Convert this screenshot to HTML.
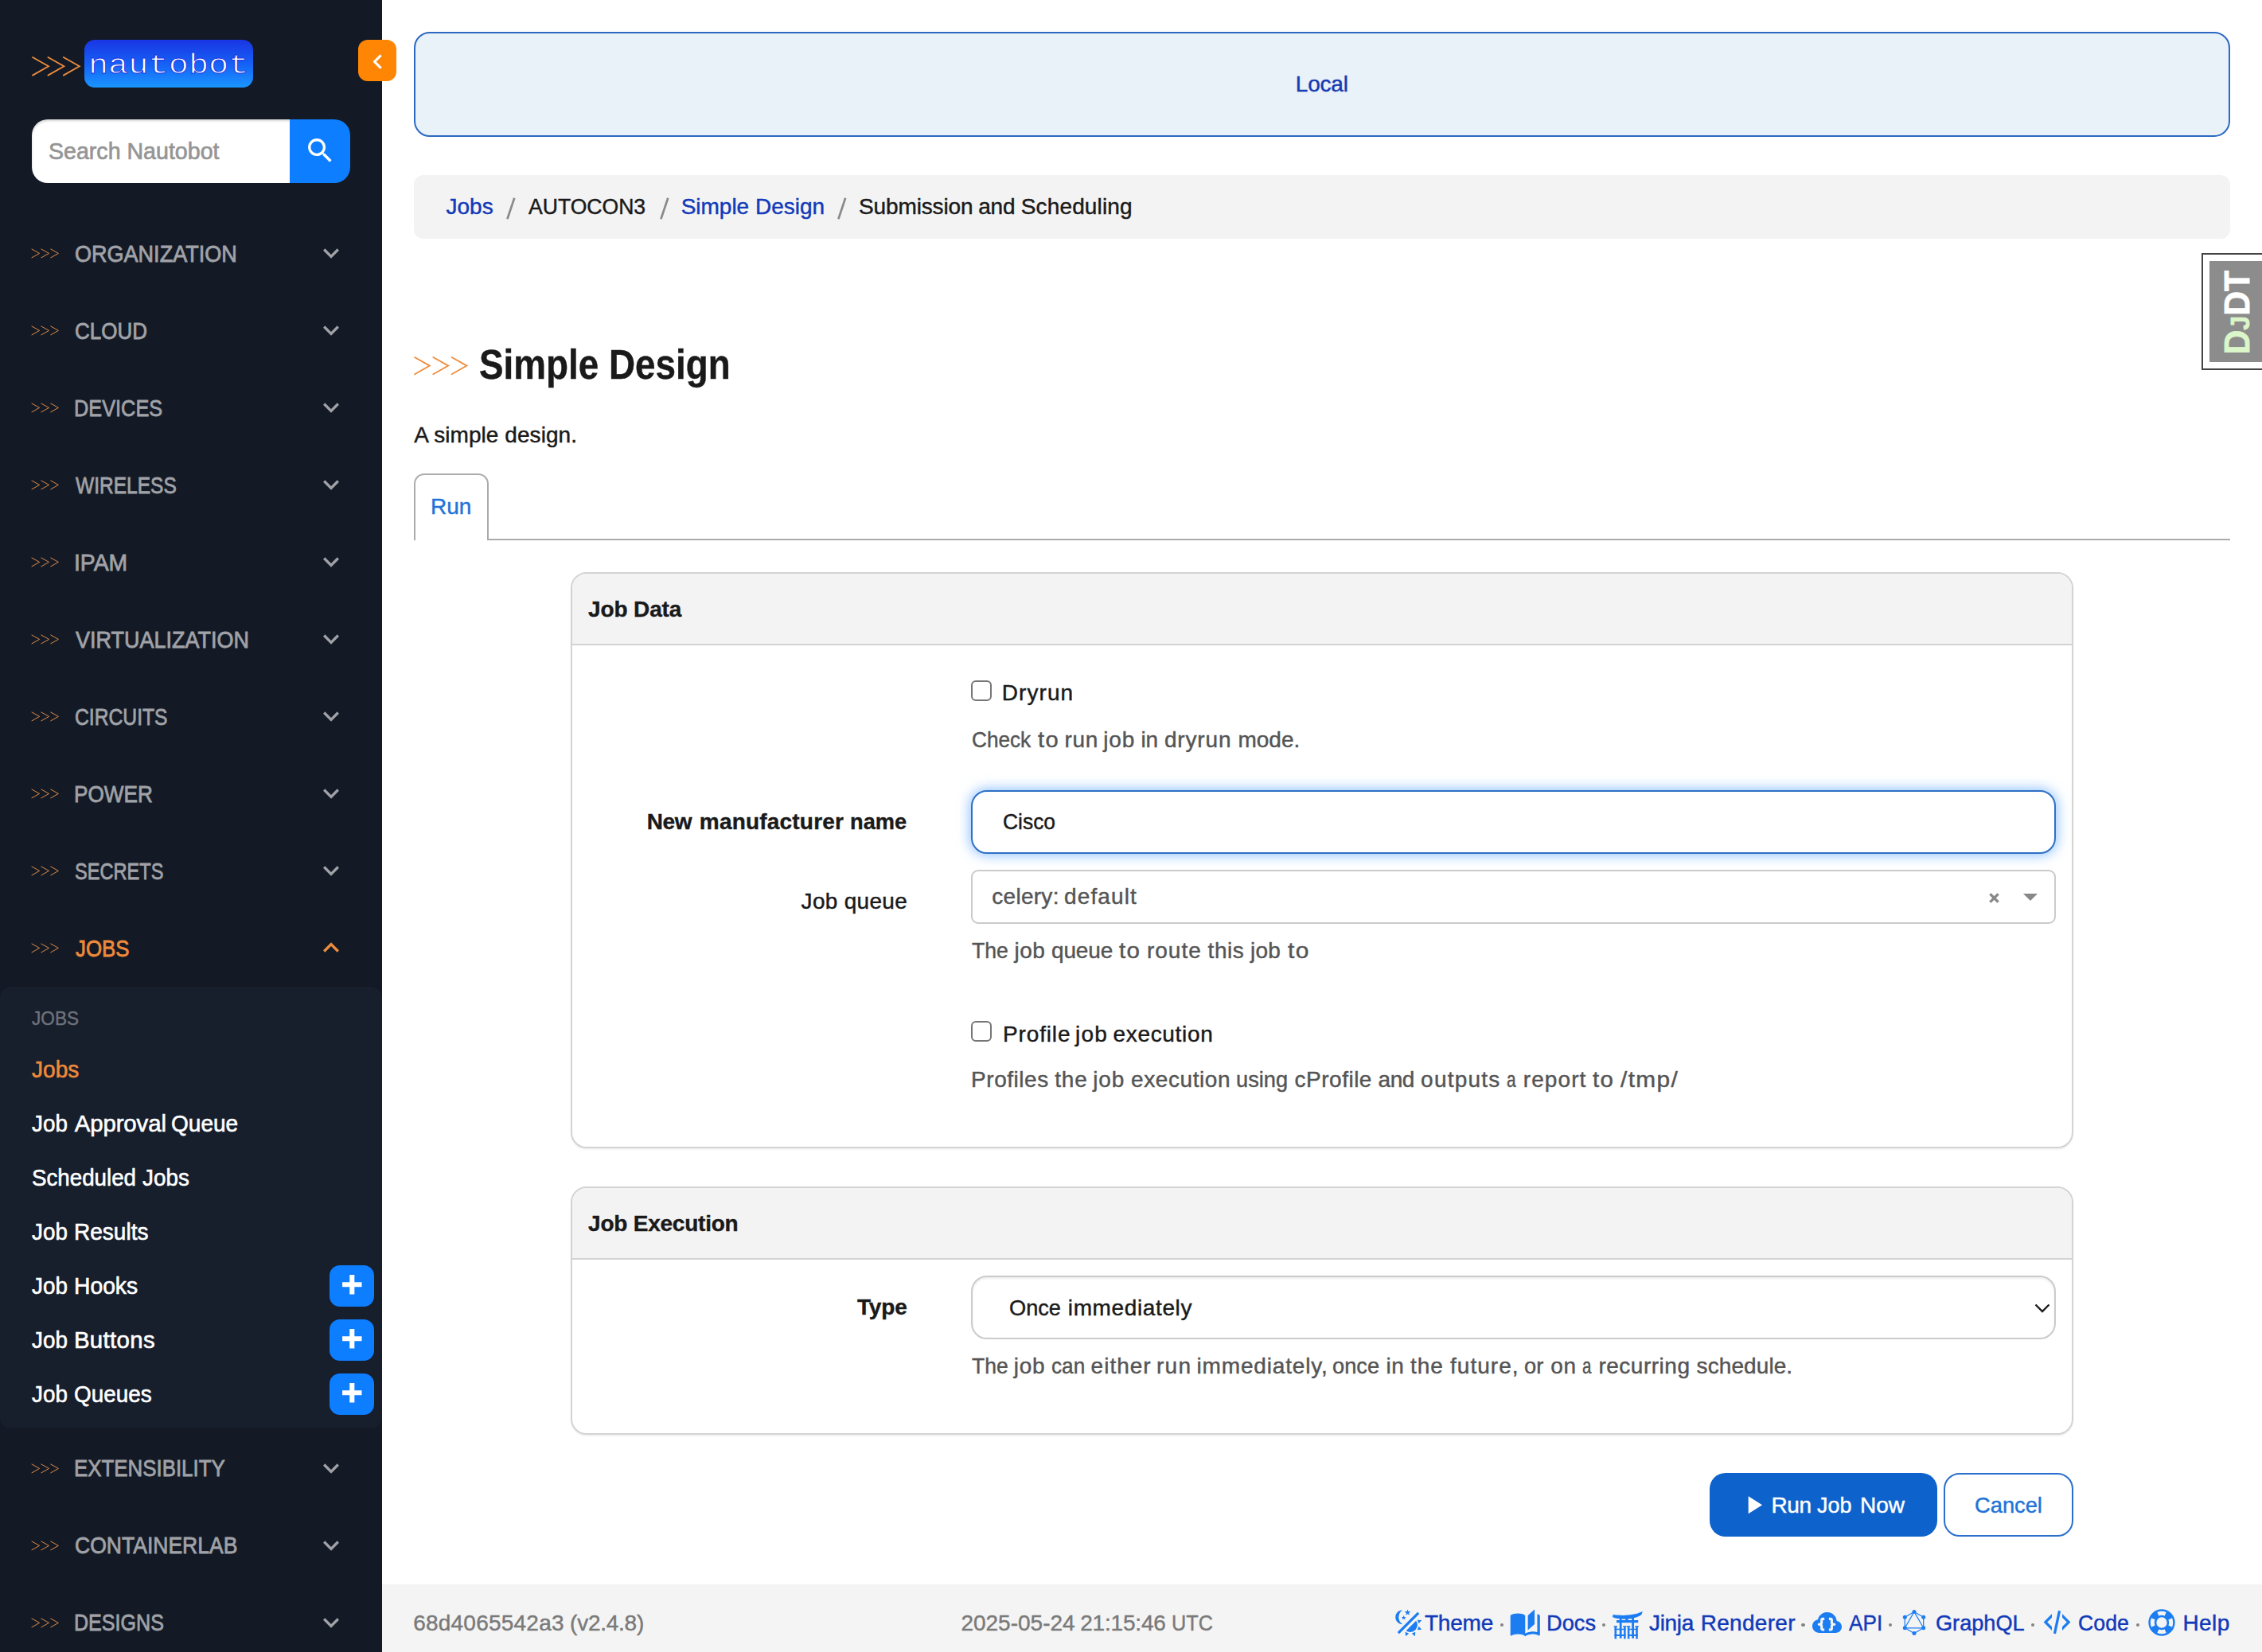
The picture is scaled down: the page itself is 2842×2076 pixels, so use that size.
<!DOCTYPE html>
<html><head><meta charset="utf-8"><title>Simple Design - Nautobot</title>
<style>
html,body{margin:0;padding:0}
body{width:2842px;height:2076px;overflow:hidden;position:relative;background:#fff;font-family:'Liberation Sans', sans-serif;}
.t{position:absolute;white-space:nowrap;line-height:1;transform-origin:0 0;margin:0;font-weight:400;text-decoration:none}
nav,main,footer{display:block}
.a{position:absolute;box-sizing:border-box}
svg{position:absolute;overflow:visible}
</style></head><body>
<nav>
<div class="a" style="left:0;top:0;width:480px;height:2076px;background:#131a26"></div>
<svg style="left:40.7px;top:71.7px" width="58.8" height="22.6" viewBox="0 0 58.8 22.6"><g fill="none" stroke="#ee8d3e" stroke-width="1.8" stroke-linecap="round" stroke-linejoin="miter"><polyline points="0.00,0 20.00,11.30 0.00,22.60"/><polyline points="19.40,0 39.40,11.30 19.40,22.60"/><polyline points="38.80,0 58.80,11.30 38.80,22.60"/></g></svg>
<svg style="left:106px;top:50px" width="212" height="60" viewBox="0 0 212 60"><defs><linearGradient id="lg" gradientUnits="userSpaceOnUse" x1="0" y1="0" x2="0" y2="60"><stop offset="0" stop-color="#1a35e4"/><stop offset="0.5" stop-color="#1560f5"/><stop offset="1" stop-color="#1a96ff"/></linearGradient></defs><rect width="212" height="60" rx="13" fill="url(#lg)"/><text transform="translate(4.9,42) scale(1.167,1)" font-family="Liberation Mono, monospace" font-size="36" fill="#fff" stroke="url(#lg)" stroke-width="0.9" paint-order="fill stroke">nautobot</text></svg>
<div class="a" style="left:40px;top:150px;width:326px;height:80px;background:#fff;border-radius:20px 0 0 20px;box-shadow:inset 0 2px 3px rgba(0,0,0,.18)"></div>
<div class="a" style="left:364px;top:150px;width:76px;height:80px;background:#0d7eff;border-radius:0 20px 20px 0"></div>
<svg style="left:381.8px;top:168.8px" width="40.6" height="40.6" viewBox="0 0 24 24"><path fill="#fff" d="M9.5,3A6.5,6.5 0 0,1 16,9.5C16,11.11 15.41,12.59 14.44,13.73L14.71,14H15.5L20.5,19L19,20.5L14,15.5V14.71L13.73,14.44C12.59,15.41 11.11,16 9.5,16A6.5,6.5 0 0,1 3,9.5A6.5,6.5 0 0,1 9.5,3M9.5,5C7,5 5,7 5,9.5C5,12 7,14 9.5,14C12,14 14,12 14,9.5C14,7 12,5 9.5,5Z"/></svg>
<svg style="left:40.3px;top:313.1px" width="33.4" height="10.8" viewBox="0 0 33.4 10.8"><g fill="none" stroke="#dd8b45" stroke-width="1.0" stroke-linecap="round" stroke-linejoin="miter"><polyline points="0.00,0 9.60,5.40 0.00,10.80"/><polyline points="11.90,0 21.50,5.40 11.90,10.80"/><polyline points="23.80,0 33.40,5.40 23.80,10.80"/></g></svg>
<svg style="left:396.0px;top:298.1px" width="40" height="40" viewBox="0 0 24 24"><path fill="#a0a2a7" d="M7.41,8.58L12,13.17L16.59,8.58L18,10L12,16L6,10L7.41,8.58Z"/></svg>
<svg style="left:40.3px;top:410.1px" width="33.4" height="10.8" viewBox="0 0 33.4 10.8"><g fill="none" stroke="#dd8b45" stroke-width="1.0" stroke-linecap="round" stroke-linejoin="miter"><polyline points="0.00,0 9.60,5.40 0.00,10.80"/><polyline points="11.90,0 21.50,5.40 11.90,10.80"/><polyline points="23.80,0 33.40,5.40 23.80,10.80"/></g></svg>
<svg style="left:396.0px;top:395.1px" width="40" height="40" viewBox="0 0 24 24"><path fill="#a0a2a7" d="M7.41,8.58L12,13.17L16.59,8.58L18,10L12,16L6,10L7.41,8.58Z"/></svg>
<svg style="left:40.3px;top:507.1px" width="33.4" height="10.8" viewBox="0 0 33.4 10.8"><g fill="none" stroke="#dd8b45" stroke-width="1.0" stroke-linecap="round" stroke-linejoin="miter"><polyline points="0.00,0 9.60,5.40 0.00,10.80"/><polyline points="11.90,0 21.50,5.40 11.90,10.80"/><polyline points="23.80,0 33.40,5.40 23.80,10.80"/></g></svg>
<svg style="left:396.0px;top:492.1px" width="40" height="40" viewBox="0 0 24 24"><path fill="#a0a2a7" d="M7.41,8.58L12,13.17L16.59,8.58L18,10L12,16L6,10L7.41,8.58Z"/></svg>
<svg style="left:40.3px;top:604.1px" width="33.4" height="10.8" viewBox="0 0 33.4 10.8"><g fill="none" stroke="#dd8b45" stroke-width="1.0" stroke-linecap="round" stroke-linejoin="miter"><polyline points="0.00,0 9.60,5.40 0.00,10.80"/><polyline points="11.90,0 21.50,5.40 11.90,10.80"/><polyline points="23.80,0 33.40,5.40 23.80,10.80"/></g></svg>
<svg style="left:396.0px;top:589.1px" width="40" height="40" viewBox="0 0 24 24"><path fill="#a0a2a7" d="M7.41,8.58L12,13.17L16.59,8.58L18,10L12,16L6,10L7.41,8.58Z"/></svg>
<svg style="left:40.3px;top:701.1px" width="33.4" height="10.8" viewBox="0 0 33.4 10.8"><g fill="none" stroke="#dd8b45" stroke-width="1.0" stroke-linecap="round" stroke-linejoin="miter"><polyline points="0.00,0 9.60,5.40 0.00,10.80"/><polyline points="11.90,0 21.50,5.40 11.90,10.80"/><polyline points="23.80,0 33.40,5.40 23.80,10.80"/></g></svg>
<svg style="left:396.0px;top:686.1px" width="40" height="40" viewBox="0 0 24 24"><path fill="#a0a2a7" d="M7.41,8.58L12,13.17L16.59,8.58L18,10L12,16L6,10L7.41,8.58Z"/></svg>
<svg style="left:40.3px;top:798.1px" width="33.4" height="10.8" viewBox="0 0 33.4 10.8"><g fill="none" stroke="#dd8b45" stroke-width="1.0" stroke-linecap="round" stroke-linejoin="miter"><polyline points="0.00,0 9.60,5.40 0.00,10.80"/><polyline points="11.90,0 21.50,5.40 11.90,10.80"/><polyline points="23.80,0 33.40,5.40 23.80,10.80"/></g></svg>
<svg style="left:396.0px;top:783.1px" width="40" height="40" viewBox="0 0 24 24"><path fill="#a0a2a7" d="M7.41,8.58L12,13.17L16.59,8.58L18,10L12,16L6,10L7.41,8.58Z"/></svg>
<svg style="left:40.3px;top:895.1px" width="33.4" height="10.8" viewBox="0 0 33.4 10.8"><g fill="none" stroke="#dd8b45" stroke-width="1.0" stroke-linecap="round" stroke-linejoin="miter"><polyline points="0.00,0 9.60,5.40 0.00,10.80"/><polyline points="11.90,0 21.50,5.40 11.90,10.80"/><polyline points="23.80,0 33.40,5.40 23.80,10.80"/></g></svg>
<svg style="left:396.0px;top:880.1px" width="40" height="40" viewBox="0 0 24 24"><path fill="#a0a2a7" d="M7.41,8.58L12,13.17L16.59,8.58L18,10L12,16L6,10L7.41,8.58Z"/></svg>
<svg style="left:40.3px;top:992.1px" width="33.4" height="10.8" viewBox="0 0 33.4 10.8"><g fill="none" stroke="#dd8b45" stroke-width="1.0" stroke-linecap="round" stroke-linejoin="miter"><polyline points="0.00,0 9.60,5.40 0.00,10.80"/><polyline points="11.90,0 21.50,5.40 11.90,10.80"/><polyline points="23.80,0 33.40,5.40 23.80,10.80"/></g></svg>
<svg style="left:396.0px;top:977.1px" width="40" height="40" viewBox="0 0 24 24"><path fill="#a0a2a7" d="M7.41,8.58L12,13.17L16.59,8.58L18,10L12,16L6,10L7.41,8.58Z"/></svg>
<svg style="left:40.3px;top:1089.1px" width="33.4" height="10.8" viewBox="0 0 33.4 10.8"><g fill="none" stroke="#dd8b45" stroke-width="1.0" stroke-linecap="round" stroke-linejoin="miter"><polyline points="0.00,0 9.60,5.40 0.00,10.80"/><polyline points="11.90,0 21.50,5.40 11.90,10.80"/><polyline points="23.80,0 33.40,5.40 23.80,10.80"/></g></svg>
<svg style="left:396.0px;top:1074.1px" width="40" height="40" viewBox="0 0 24 24"><path fill="#a0a2a7" d="M7.41,8.58L12,13.17L16.59,8.58L18,10L12,16L6,10L7.41,8.58Z"/></svg>
<svg style="left:40.3px;top:1186.1px" width="33.4" height="10.8" viewBox="0 0 33.4 10.8"><g fill="none" stroke="#dd8b45" stroke-width="1.0" stroke-linecap="round" stroke-linejoin="miter"><polyline points="0.00,0 9.60,5.40 0.00,10.80"/><polyline points="11.90,0 21.50,5.40 11.90,10.80"/><polyline points="23.80,0 33.40,5.40 23.80,10.80"/></g></svg>
<svg style="left:396.0px;top:1171.0px" width="40" height="40" viewBox="0 0 24 24"><path fill="#ee8d3e" d="M7.41,15.41L12,10.83L16.59,15.41L18,14L12,8L6,14L7.41,15.41Z"/></svg>
<svg style="left:40.3px;top:1839.6px" width="33.4" height="10.8" viewBox="0 0 33.4 10.8"><g fill="none" stroke="#dd8b45" stroke-width="1.0" stroke-linecap="round" stroke-linejoin="miter"><polyline points="0.00,0 9.60,5.40 0.00,10.80"/><polyline points="11.90,0 21.50,5.40 11.90,10.80"/><polyline points="23.80,0 33.40,5.40 23.80,10.80"/></g></svg>
<svg style="left:396.0px;top:1824.6px" width="40" height="40" viewBox="0 0 24 24"><path fill="#a0a2a7" d="M7.41,8.58L12,13.17L16.59,8.58L18,10L12,16L6,10L7.41,8.58Z"/></svg>
<svg style="left:40.3px;top:1936.6px" width="33.4" height="10.8" viewBox="0 0 33.4 10.8"><g fill="none" stroke="#dd8b45" stroke-width="1.0" stroke-linecap="round" stroke-linejoin="miter"><polyline points="0.00,0 9.60,5.40 0.00,10.80"/><polyline points="11.90,0 21.50,5.40 11.90,10.80"/><polyline points="23.80,0 33.40,5.40 23.80,10.80"/></g></svg>
<svg style="left:396.0px;top:1921.6px" width="40" height="40" viewBox="0 0 24 24"><path fill="#a0a2a7" d="M7.41,8.58L12,13.17L16.59,8.58L18,10L12,16L6,10L7.41,8.58Z"/></svg>
<svg style="left:40.3px;top:2033.6px" width="33.4" height="10.8" viewBox="0 0 33.4 10.8"><g fill="none" stroke="#dd8b45" stroke-width="1.0" stroke-linecap="round" stroke-linejoin="miter"><polyline points="0.00,0 9.60,5.40 0.00,10.80"/><polyline points="11.90,0 21.50,5.40 11.90,10.80"/><polyline points="23.80,0 33.40,5.40 23.80,10.80"/></g></svg>
<svg style="left:396.0px;top:2018.6px" width="40" height="40" viewBox="0 0 24 24"><path fill="#a0a2a7" d="M7.41,8.58L12,13.17L16.59,8.58L18,10L12,16L6,10L7.41,8.58Z"/></svg>
<div class="a" style="left:0;top:1240px;width:480px;height:555px;background:#171e2c;border-radius:14px"></div>
<div class="a" style="left:414px;top:1590px;width:56px;height:52px;background:#0d7eff;border-radius:13px"></div>
<svg style="left:423.7px;top:1596.2px" width="36.6" height="36.6" viewBox="0 0 24 24"><path fill="#fff" d="M20 14H14V20H10V14H4V10H10V4H14V10H20V14Z"/></svg>
<div class="a" style="left:414px;top:1658px;width:56px;height:52px;background:#0d7eff;border-radius:13px"></div>
<svg style="left:423.7px;top:1664.2px" width="36.6" height="36.6" viewBox="0 0 24 24"><path fill="#fff" d="M20 14H14V20H10V14H4V10H10V4H14V10H20V14Z"/></svg>
<div class="a" style="left:414px;top:1726px;width:56px;height:52px;background:#0d7eff;border-radius:13px"></div>
<svg style="left:423.7px;top:1732.2px" width="36.6" height="36.6" viewBox="0 0 24 24"><path fill="#fff" d="M20 14H14V20H10V14H4V10H10V4H14V10H20V14Z"/></svg>
<span class="t" style="left:61.4px;top:174.6px;font-size:29.4px;-webkit-text-stroke:0.7px;transform:scaleX(0.9723);color:#959595">Search Nautobot</span>
<span class="t" style="left:93.8px;top:303.7px;font-size:29.4px;-webkit-text-stroke:0.8px;transform:scaleX(0.9197);color:#a0a2a7">ORGANIZATION</span>
<span class="t" style="left:93.9px;top:400.7px;font-size:29.4px;-webkit-text-stroke:0.8px;transform:scaleX(0.8841);color:#a0a2a7">CLOUD</span>
<span class="t" style="left:93.0px;top:497.7px;font-size:29.4px;-webkit-text-stroke:0.8px;transform:scaleX(0.8615);color:#a0a2a7">DEVICES</span>
<span class="t" style="left:94.7px;top:594.7px;font-size:29.4px;-webkit-text-stroke:0.8px;transform:scaleX(0.8344);color:#a0a2a7">WIRELESS</span>
<span class="t" style="left:92.9px;top:691.7px;font-size:29.4px;-webkit-text-stroke:0.8px;transform:scaleX(0.9643);color:#a0a2a7">IPAM</span>
<span class="t" style="left:94.8px;top:788.7px;font-size:29.4px;-webkit-text-stroke:0.8px;transform:scaleX(0.9181);color:#a0a2a7">VIRTUALIZATION</span>
<span class="t" style="left:93.9px;top:885.7px;font-size:29.4px;-webkit-text-stroke:0.8px;transform:scaleX(0.8400);color:#a0a2a7">CIRCUITS</span>
<span class="t" style="left:93.0px;top:982.7px;font-size:29.4px;-webkit-text-stroke:0.8px;transform:scaleX(0.8894);color:#a0a2a7">POWER</span>
<span class="t" style="left:93.9px;top:1079.7px;font-size:29.4px;-webkit-text-stroke:0.8px;transform:scaleX(0.8028);color:#a0a2a7">SECRETS</span>
<span class="t" style="left:94.8px;top:1176.7px;font-size:29.4px;-webkit-text-stroke:0.8px;transform:scaleX(0.8797);color:#ee8a3a">JOBS</span>
<span class="t" style="left:93.2px;top:1830.2px;font-size:29.4px;-webkit-text-stroke:0.8px;transform:scaleX(0.8798);color:#a0a2a7">EXTENSIBILITY</span>
<span class="t" style="left:94.1px;top:1927.2px;font-size:29.4px;-webkit-text-stroke:0.8px;transform:scaleX(0.9027);color:#a0a2a7">CONTAINERLAB</span>
<span class="t" style="left:93.2px;top:2024.2px;font-size:29.4px;-webkit-text-stroke:0.8px;transform:scaleX(0.8537);color:#a0a2a7">DESIGNS</span>
<span class="t" style="left:40.2px;top:1267.8px;font-size:24px;-webkit-text-stroke:0.45px;transform:scaleX(0.9416);color:#6d727a">JOBS</span>
<span class="t" style="left:40.3px;top:1328.6px;font-size:29.4px;-webkit-text-stroke:0.6px;transform:scaleX(0.9550);color:#ee8a3a">Jobs</span>
<span class="t" style="left:40.2px;top:1396.6px;font-size:29.4px;-webkit-text-stroke:0.6px;transform:scaleX(0.9467);color:#ffffff">Job</span>
<span class="t" style="left:93.7px;top:1396.6px;font-size:29.4px;-webkit-text-stroke:0.6px;letter-spacing:-0.110px;color:#ffffff">Approval</span>
<span class="t" style="left:215.0px;top:1396.6px;font-size:29.4px;-webkit-text-stroke:0.6px;transform:scaleX(0.9543);color:#ffffff">Queue</span>
<span class="t" style="left:39.6px;top:1464.6px;font-size:29.4px;-webkit-text-stroke:0.6px;transform:scaleX(0.9434);color:#ffffff">Scheduled</span>
<span class="t" style="left:178.8px;top:1464.6px;font-size:29.4px;-webkit-text-stroke:0.6px;transform:scaleX(0.9470);color:#ffffff">Jobs</span>
<span class="t" style="left:40.2px;top:1532.6px;font-size:29.4px;-webkit-text-stroke:0.6px;transform:scaleX(0.9467);color:#ffffff">Job</span>
<span class="t" style="left:93.0px;top:1532.6px;font-size:29.4px;-webkit-text-stroke:0.6px;transform:scaleX(0.9540);color:#ffffff">Results</span>
<span class="t" style="left:40.2px;top:1600.6px;font-size:29.4px;-webkit-text-stroke:0.6px;transform:scaleX(0.9467);color:#ffffff">Job</span>
<span class="t" style="left:93.0px;top:1600.6px;font-size:29.4px;-webkit-text-stroke:0.6px;transform:scaleX(0.9617);color:#ffffff">Hooks</span>
<span class="t" style="left:40.2px;top:1668.6px;font-size:29.4px;-webkit-text-stroke:0.6px;transform:scaleX(0.9467);color:#ffffff">Job</span>
<span class="t" style="left:92.9px;top:1668.6px;font-size:29.4px;-webkit-text-stroke:0.6px;letter-spacing:0.355px;color:#ffffff">Buttons</span>
<span class="t" style="left:40.2px;top:1736.6px;font-size:29.4px;-webkit-text-stroke:0.6px;transform:scaleX(0.9467);color:#ffffff">Job</span>
<span class="t" style="left:93.1px;top:1736.6px;font-size:29.4px;-webkit-text-stroke:0.6px;transform:scaleX(0.9495);color:#ffffff">Queues</span>
</nav>
<main>
<div class="a" style="left:450px;top:50px;width:48px;height:52px;background:#ff8504;border-radius:12px"></div>
<svg style="left:455.8px;top:58.7px" width="37" height="37" viewBox="0 0 24 24"><path fill="#fff" d="M15.41,16.58L10.83,12L15.41,7.41L14,6L8,12L14,18L15.41,16.58Z"/></svg>
<div class="a" style="left:520px;top:40px;width:2282px;height:132px;background:#e9f1f9;border:2px solid #2b69c3;border-radius:20px"></div>
<div class="a" style="left:520px;top:220px;width:2282px;height:80px;background:#f3f3f3;border-radius:12px"></div>
<div class="a" style="left:2766px;top:318px;width:90px;height:147px;background:#fff;border:2.5px solid #444"></div>
<div class="a" style="left:2776px;top:328px;width:80px;height:127px;background:#8c8c8c"></div>
<svg style="left:2776px;top:328px" width="66" height="127" viewBox="0 0 66 127"><g transform="translate(49.8,117.6) rotate(-90) scale(0.95,1.0)" font-family="Liberation Sans, sans-serif" font-weight="700" stroke-width="0.8"><text x="0" y="0" font-size="45" fill="#dbf6c9" stroke="#dbf6c9">D<tspan font-size="34">J</tspan><tspan fill="#ffffff" stroke="#ffffff">DT</tspan></text></g></svg>
<svg style="left:521.0px;top:449.4px" width="65.5" height="21.2" viewBox="0 0 65.5 21.2"><g fill="none" stroke="#ee8d3e" stroke-width="1.8" stroke-linecap="round" stroke-linejoin="miter"><polyline points="0.00,0 18.90,10.60 0.00,21.20"/><polyline points="23.30,0 42.20,10.60 23.30,21.20"/><polyline points="46.60,0 65.50,10.60 46.60,21.20"/></g></svg>
<div class="a" style="left:520px;top:677px;width:2282px;height:2px;background:#ababab"></div>
<div class="a" style="left:520px;top:595px;width:94px;height:84px;background:#fff;border:2px solid #ababab;border-bottom:none;border-radius:13px 13px 0 0"></div>
<div class="a" style="left:717px;top:719px;width:1888px;height:724px;background:#fff;border:2px solid #d3d3d3;border-radius:20px;box-shadow:0 2px 2px rgba(0,0,0,.05);overflow:hidden"><div style="height:88px;background:#f3f3f3;border-bottom:2px solid #d3d3d3"></div></div>
<div class="a" style="left:1220px;top:854.8px;width:26px;height:26px;background:#fff;border:2px solid #767676;border-radius:6px"></div>
<div class="a" style="left:1220px;top:993px;width:1363px;height:80px;background:#fff;border:2px solid #2f6fc6;border-radius:20px;box-shadow:0 0 15px 2px rgba(80,160,255,.62)"></div>
<div class="a" style="left:1220px;top:1093px;width:1363px;height:68px;background:#fff;border:2px solid #cbcbcb;border-radius:9px"></div>
<svg style="left:2498.5px;top:1122px" width="13" height="13" viewBox="0 0 14 14"><path d="M1.5 1.5L12.5 12.5M12.5 1.5L1.5 12.5" stroke="#888" stroke-width="3.6" fill="none"/></svg>
<svg style="left:2541.5px;top:1123px" width="18" height="9" viewBox="0 0 18 9"><path d="M0 0H18L9 9Z" fill="#888"/></svg>
<div class="a" style="left:1220px;top:1282.8px;width:26px;height:26px;background:#fff;border:2px solid #767676;border-radius:6px"></div>
<div class="a" style="left:717px;top:1491px;width:1888px;height:312px;background:#fff;border:2px solid #d3d3d3;border-radius:20px;box-shadow:0 2px 2px rgba(0,0,0,.05);overflow:hidden"><div style="height:88px;background:#f3f3f3;border-bottom:2px solid #d3d3d3"></div></div>
<div class="a" style="left:1220px;top:1603px;width:1363px;height:80px;background:#fff;border:2px solid #cbcbcb;border-radius:20px;box-shadow:inset 0 2px 3px rgba(0,0,0,.07)"></div>
<svg style="left:2556px;top:1637.5px" width="20" height="12" viewBox="0 0 20 12"><path d="M1.5 1.5L10 10L18.5 1.5" stroke="#1a1a1a" stroke-width="2.4" fill="none"/></svg>
<div class="a" style="left:2148px;top:1851px;width:286px;height:80px;background:#0d62cc;border-radius:20px"></div>
<svg style="left:2184.3px;top:1871.6px" width="38" height="38" viewBox="0 0 24 24"><path fill="#fff" d="M8,5.14V19.14L19,12.14L8,5.14Z"/></svg>
<div class="a" style="left:2441.5px;top:1851px;width:163.5px;height:80px;background:#fff;border:2px solid #2a70cc;border-radius:20px"></div>
<svg style="left:633.5px;top:245.5px" width="16" height="32" viewBox="0 0 16 32"><line x1="3.4" y1="29.2" x2="12.3" y2="2.8" stroke="#8a8a8a" stroke-width="2.7"/></svg>
<svg style="left:826.5px;top:245.5px" width="16" height="32" viewBox="0 0 16 32"><line x1="3.4" y1="29.2" x2="12.3" y2="2.8" stroke="#8a8a8a" stroke-width="2.7"/></svg>
<svg style="left:1049.7px;top:245.5px" width="16" height="32" viewBox="0 0 16 32"><line x1="3.4" y1="29.2" x2="12.2" y2="2.8" stroke="#8a8a8a" stroke-width="2.7"/></svg>
<span class="t" style="left:1627.8px;top:92.2px;font-size:28px;-webkit-text-stroke:0.45px;letter-spacing:-0.192px;color:#173bb0">Local</span>
<a class="t" style="left:560.5px;top:245.8px;font-size:28px;-webkit-text-stroke:0.45px;color:#123ab9">Jobs</a>
<span class="t" style="left:664.0px;top:245.8px;font-size:28px;-webkit-text-stroke:0.45px;transform:scaleX(0.9487);color:#1a1a1a">AUTOCON3</span>
<a class="t" style="left:855.7px;top:245.8px;font-size:28px;-webkit-text-stroke:0.45px;letter-spacing:-0.017px;color:#123ab9">Simple Design</a>
<span class="t" style="left:1079.1px;top:245.8px;font-size:28px;-webkit-text-stroke:0.45px;letter-spacing:-0.145px;color:#1a1a1a">Submission</span>
<span class="t" style="left:1229.2px;top:245.8px;font-size:28px;-webkit-text-stroke:0.45px;letter-spacing:-0.197px;color:#1a1a1a">and</span>
<span class="t" style="left:1282.8px;top:245.8px;font-size:28px;-webkit-text-stroke:0.45px;letter-spacing:0.130px;color:#1a1a1a">Scheduling</span>
<h1 class="t" style="left:602.1px;top:432.8px;font-size:51px;-webkit-text-stroke:0.4px;font-weight:700;transform:scaleX(0.8983);color:#1a1a1a">Simple Design</h1>
<span class="t" style="left:520.2px;top:532.9px;font-size:28px;-webkit-text-stroke:0.45px;letter-spacing:0.060px;color:#1a1a1a">A simple design.</span>
<a class="t" style="left:541.0px;top:622.7px;font-size:28px;-webkit-text-stroke:0.45px;letter-spacing:-0.071px;color:#1f74d8">Run</a>
<span class="t" style="left:739.1px;top:752.2px;font-size:28px;-webkit-text-stroke:0.4px;font-weight:700;letter-spacing:-0.139px;color:#1a1a1a">Job Data</span>
<span class="t" style="left:1258.8px;top:857.2px;font-size:28px;-webkit-text-stroke:0.45px;letter-spacing:1.062px;color:#1a1a1a">Dryrun</span>
<span class="t" style="left:1220.6px;top:915.6px;font-size:28px;-webkit-text-stroke:0.45px;transform:scaleX(0.9347);color:#555555">Check</span>
<span class="t" style="left:1304.1px;top:915.6px;font-size:28px;-webkit-text-stroke:0.45px;letter-spacing:1.260px;transform:scaleX(1.0413);color:#555555">to</span>
<span class="t" style="left:1337.5px;top:915.6px;font-size:28px;-webkit-text-stroke:0.45px;letter-spacing:0.727px;color:#555555">run</span>
<span class="t" style="left:1386.3px;top:915.6px;font-size:28px;-webkit-text-stroke:0.45px;letter-spacing:0.779px;color:#555555">job</span>
<span class="t" style="left:1433.6px;top:915.6px;font-size:28px;-webkit-text-stroke:0.45px;letter-spacing:-0.371px;color:#555555">in</span>
<span class="t" style="left:1462.9px;top:915.6px;font-size:28px;-webkit-text-stroke:0.45px;letter-spacing:0.851px;color:#555555">dryrun</span>
<span class="t" style="left:1555.4px;top:915.6px;font-size:28px;-webkit-text-stroke:0.45px;letter-spacing:0.027px;color:#555555">mode.</span>
<span class="t" style="left:812.7px;top:1018.8px;font-size:28px;-webkit-text-stroke:0.4px;font-weight:700;letter-spacing:-0.346px;color:#1a1a1a">New</span>
<span class="t" style="left:878.8px;top:1018.8px;font-size:28px;-webkit-text-stroke:0.4px;font-weight:700;letter-spacing:0.196px;color:#1a1a1a">manufacturer</span>
<span class="t" style="left:1068.2px;top:1018.8px;font-size:28px;-webkit-text-stroke:0.4px;font-weight:700;transform:scaleX(0.9726);color:#1a1a1a">name</span>
<span class="t" style="left:1259.9px;top:1018.8px;font-size:28px;-webkit-text-stroke:0.45px;transform:scaleX(0.9435);color:#1a1a1a">Cisco</span>
<span class="t" style="left:1006.6px;top:1118.9px;font-size:28px;-webkit-text-stroke:0.45px;letter-spacing:0.292px;color:#1a1a1a">Job queue</span>
<span class="t" style="left:1246.3px;top:1113.1px;font-size:28px;-webkit-text-stroke:0.45px;letter-spacing:0.277px;color:#555555">celery:</span>
<span class="t" style="left:1337.0px;top:1113.1px;font-size:28px;-webkit-text-stroke:0.45px;letter-spacing:1.127px;color:#555555">default</span>
<span class="t" style="left:1220.5px;top:1181.2px;font-size:28px;-webkit-text-stroke:0.45px;transform:scaleX(0.9517);color:#555555">The</span>
<span class="t" style="left:1274.5px;top:1181.2px;font-size:28px;-webkit-text-stroke:0.45px;letter-spacing:0.479px;color:#555555">job</span>
<span class="t" style="left:1321.0px;top:1181.2px;font-size:28px;-webkit-text-stroke:0.45px;letter-spacing:-0.135px;color:#555555">queue</span>
<span class="t" style="left:1406.2px;top:1181.2px;font-size:28px;-webkit-text-stroke:0.45px;letter-spacing:1.260px;transform:scaleX(1.0535);color:#555555">to</span>
<span class="t" style="left:1441.0px;top:1181.2px;font-size:28px;-webkit-text-stroke:0.45px;letter-spacing:0.975px;color:#555555">route</span>
<span class="t" style="left:1517.6px;top:1181.2px;font-size:28px;-webkit-text-stroke:0.45px;letter-spacing:0.559px;color:#555555">this</span>
<span class="t" style="left:1570.9px;top:1181.2px;font-size:28px;-webkit-text-stroke:0.45px;letter-spacing:0.279px;color:#555555">job</span>
<span class="t" style="left:1617.6px;top:1181.2px;font-size:28px;-webkit-text-stroke:0.45px;letter-spacing:1.260px;transform:scaleX(1.0699);color:#555555">to</span>
<span class="t" style="left:1260.0px;top:1285.5px;font-size:28px;-webkit-text-stroke:0.45px;letter-spacing:0.860px;color:#1a1a1a">Profile</span>
<span class="t" style="left:1351.2px;top:1285.5px;font-size:28px;-webkit-text-stroke:0.45px;letter-spacing:1.260px;transform:scaleX(1.0009);color:#1a1a1a">job</span>
<span class="t" style="left:1398.6px;top:1285.5px;font-size:28px;-webkit-text-stroke:0.45px;letter-spacing:0.658px;color:#1a1a1a">execution</span>
<span class="t" style="left:1220.1px;top:1343.2px;font-size:28px;-webkit-text-stroke:0.45px;letter-spacing:0.526px;color:#555555">Profiles</span>
<span class="t" style="left:1325.2px;top:1343.2px;font-size:28px;-webkit-text-stroke:0.45px;letter-spacing:0.899px;color:#555555">the</span>
<span class="t" style="left:1373.3px;top:1343.2px;font-size:28px;-webkit-text-stroke:0.45px;letter-spacing:0.779px;color:#555555">job</span>
<span class="t" style="left:1421.1px;top:1343.2px;font-size:28px;-webkit-text-stroke:0.45px;letter-spacing:0.570px;color:#555555">execution</span>
<span class="t" style="left:1553.0px;top:1343.2px;font-size:28px;-webkit-text-stroke:0.45px;transform:scaleX(0.9720);color:#555555">using</span>
<span class="t" style="left:1626.6px;top:1343.2px;font-size:28px;-webkit-text-stroke:0.45px;letter-spacing:0.494px;color:#555555">cProfile</span>
<span class="t" style="left:1731.5px;top:1343.2px;font-size:28px;-webkit-text-stroke:0.45px;letter-spacing:-0.447px;color:#555555">and</span>
<span class="t" style="left:1785.1px;top:1343.2px;font-size:28px;-webkit-text-stroke:0.45px;letter-spacing:1.234px;color:#555555">outputs</span>
<span class="t" style="left:1892.6px;top:1343.2px;font-size:28px;-webkit-text-stroke:0.45px;transform:scaleX(0.7443);color:#555555">a</span>
<span class="t" style="left:1913.8px;top:1343.2px;font-size:28px;-webkit-text-stroke:0.45px;letter-spacing:1.077px;color:#555555">report</span>
<span class="t" style="left:2001.0px;top:1343.2px;font-size:28px;-webkit-text-stroke:0.45px;letter-spacing:1.260px;transform:scaleX(1.0535);color:#555555">to</span>
<span class="t" style="left:2035.5px;top:1343.2px;font-size:28px;-webkit-text-stroke:0.45px;letter-spacing:1.260px;transform:scaleX(1.0656);color:#555555">/tmp/</span>
<span class="t" style="left:739.1px;top:1523.7px;font-size:28px;-webkit-text-stroke:0.4px;font-weight:700;letter-spacing:-0.230px;color:#1a1a1a">Job Execution</span>
<span class="t" style="left:1076.9px;top:1629.2px;font-size:28px;-webkit-text-stroke:0.4px;font-weight:700;letter-spacing:-0.134px;color:#1a1a1a">Type</span>
<span class="t" style="left:1268.2px;top:1629.8px;font-size:28px;-webkit-text-stroke:0.45px;transform:scaleX(0.9711);color:#1a1a1a">Once</span>
<span class="t" style="left:1341.8px;top:1629.8px;font-size:28px;-webkit-text-stroke:0.45px;letter-spacing:0.627px;color:#1a1a1a">immediately</span>
<span class="t" style="left:1220.5px;top:1702.8px;font-size:28px;-webkit-text-stroke:0.45px;transform:scaleX(0.9475);color:#555555">The</span>
<span class="t" style="left:1273.7px;top:1702.8px;font-size:28px;-webkit-text-stroke:0.45px;letter-spacing:0.779px;color:#555555">job</span>
<span class="t" style="left:1320.8px;top:1702.8px;font-size:28px;-webkit-text-stroke:0.45px;transform:scaleX(0.9344);color:#555555">can</span>
<span class="t" style="left:1370.6px;top:1702.8px;font-size:28px;-webkit-text-stroke:0.45px;letter-spacing:1.007px;color:#555555">either</span>
<span class="t" style="left:1453.3px;top:1702.8px;font-size:28px;-webkit-text-stroke:0.45px;letter-spacing:1.260px;transform:scaleX(1.0033);color:#555555">run</span>
<span class="t" style="left:1503.5px;top:1702.8px;font-size:28px;-webkit-text-stroke:0.45px;letter-spacing:0.841px;color:#555555">immediately,</span>
<span class="t" style="left:1674.0px;top:1702.8px;font-size:28px;-webkit-text-stroke:0.45px;transform:scaleX(0.9732);color:#555555">once</span>
<span class="t" style="left:1741.5px;top:1702.8px;font-size:28px;-webkit-text-stroke:0.45px;letter-spacing:0.529px;color:#555555">in</span>
<span class="t" style="left:1772.1px;top:1702.8px;font-size:28px;-webkit-text-stroke:0.45px;letter-spacing:0.849px;color:#555555">the</span>
<span class="t" style="left:1822.0px;top:1702.8px;font-size:28px;-webkit-text-stroke:0.45px;letter-spacing:1.025px;color:#555555">future,</span>
<span class="t" style="left:1914.9px;top:1702.8px;font-size:28px;-webkit-text-stroke:0.45px;transform:scaleX(0.9741);color:#555555">or</span>
<span class="t" style="left:1948.3px;top:1702.8px;font-size:28px;-webkit-text-stroke:0.45px;letter-spacing:0.678px;color:#555555">on</span>
<span class="t" style="left:1987.9px;top:1702.8px;font-size:28px;-webkit-text-stroke:0.45px;transform:scaleX(0.7314);color:#555555">a</span>
<span class="t" style="left:2008.4px;top:1702.8px;font-size:28px;-webkit-text-stroke:0.45px;letter-spacing:0.517px;color:#555555">recurring</span>
<span class="t" style="left:2131.6px;top:1702.8px;font-size:28px;-webkit-text-stroke:0.45px;letter-spacing:0.083px;color:#555555">schedule.</span>
<span class="t" style="left:2225.5px;top:1877.7px;font-size:28px;-webkit-text-stroke:0.45px;letter-spacing:-0.371px;color:#ffffff">Run</span>
<span class="t" style="left:2283.2px;top:1877.7px;font-size:28px;-webkit-text-stroke:0.45px;transform:scaleX(0.9617);color:#ffffff">Job</span>
<span class="t" style="left:2337.1px;top:1877.7px;font-size:28px;-webkit-text-stroke:0.45px;letter-spacing:-0.121px;color:#ffffff">Now</span>
<a class="t" style="left:2481.0px;top:1877.7px;font-size:28px;-webkit-text-stroke:0.45px;transform:scaleX(0.9744);color:#1f74d8">Cancel</a>
</main>
<footer>
<div class="a" style="left:480px;top:1991px;width:2362px;height:85px;background:#f4f4f4"></div>
<svg style="left:1749.5px;top:2020.4px" width="39" height="39" viewBox="0 0 24 24"><path fill="#1c7df2" d="M7.5,2C5.71,3.15 4.5,5.18 4.5,7.5C4.5,9.82 5.71,11.85 7.53,13C4.46,13 2,10.54 2,7.5A5.5,5.5 0 0,1 7.5,2M19.07,3.5L20.5,4.93L4.93,20.5L3.5,19.07L19.07,3.5M12.89,5.93L11.41,5L9.97,6L10.39,4.3L9,3.24L10.75,3.12L11.33,1.47L12,3.1L13.73,3.13L12.38,4.26L12.89,5.93M9.59,9.54L8.43,8.81L7.31,9.59L7.65,8.27L6.56,7.44L7.92,7.35L8.37,6.06L8.88,7.33L10.24,7.36L9.19,8.23L9.59,9.54M19,13.5A5.5,5.5 0 0,1 13.5,19C12.28,19 11.15,18.6 10.24,17.93L17.93,10.24C18.6,11.15 19,12.28 19,13.5M14.6,20.08L17.37,18.93L17.13,22.28L14.6,20.08M18.93,17.38L20.08,14.61L22.28,17.15L18.93,17.38M20.08,12.42L18.94,9.64L22.28,9.88L20.08,12.42M9.63,18.93L12.4,20.08L9.87,22.27L9.63,18.93Z"/></svg>
<svg style="left:1896.1px;top:2019.4px" width="40.5" height="40.5" viewBox="0 0 24 24"><path fill="#1c7df2" d="M19 2L14 6.5V17.5L19 13V2M6.5 5C4.55 5 2.45 5.4 1 6.5V21.16C1 21.41 1.25 21.66 1.5 21.66C1.6 21.66 1.65 21.59 1.75 21.59C3.1 20.94 5.05 20.5 6.5 20.5C8.45 20.5 10.55 20.9 12 22C13.35 21.15 15.8 20.5 17.5 20.5C19.15 20.5 20.85 20.81 22.25 21.56C22.35 21.61 22.4 21.59 22.5 21.59C22.75 21.59 23 21.34 23 21.09V6.5C22.4 6.05 21.75 5.75 21 5.5V19C19.9 18.65 18.7 18.5 17.5 18.5C15.8 18.5 13.35 19.15 12 20V6.5C10.55 5.4 8.45 5 6.5 5Z"/></svg>
<svg style="left:2026px;top:2025px" width="38" height="35" viewBox="0 0 38 35"><g fill="#1c7df2"><path d="M0.6 4.1Q18.3 6.2 30.8 2.8L37.8 0L36.5 3.9Q30 8.6 18.3 9.8Q8 10 0 7.2Z"/><rect x="5" y="11" width="27.2" height="3.2"/><rect x="8.8" y="8" width="2.8" height="25.8"/><rect x="24.2" y="8" width="2.8" height="25.8"/><rect x="16.4" y="9" width="3.1" height="3"/><rect x="2.5" y="19" width="2.6" height="15.5"/><rect x="14.1" y="19" width="2.5" height="15.5"/><rect x="18.9" y="19" width="2.5" height="15.5"/><rect x="29.2" y="19" width="2.6" height="15.5"/><rect x="1.6" y="18.2" width="4.4" height="1.5"/><rect x="13.2" y="18.2" width="4.3" height="1.5"/><rect x="18" y="18.2" width="4.3" height="1.5"/><rect x="28.3" y="18.2" width="4.4" height="1.5"/><rect x="2.5" y="21.7" width="14.1" height="1.5"/><rect x="18.9" y="21.7" width="12.9" height="1.5"/><rect x="2.5" y="29" width="14.1" height="2"/><rect x="18.9" y="29" width="12.9" height="2"/></g></svg>
<svg style="left:2276.5px;top:2026px" width="37" height="26" viewBox="0 0 37 26"><path fill="#1c7df2" d="M9 26C4 26 0 22.3 0 17.5C0 13.3 3 9.9 7 9.2C8.3 3.9 13 0 18.7 0C25 0 30.2 4.8 30.7 11C34.3 11.5 37 14.6 37 18.3C37 22.6 33.6 26 29.3 26Z"/><g fill="none" stroke="#f4f4f4" stroke-width="3.1" stroke-linecap="butt" stroke-linejoin="round"><path d="M15.2 8.4H13.4Q11.7 8.4 11.7 10.1V13Q11.7 15.2 8.3 15.2Q11.7 15.2 11.7 17.4V20.3Q11.7 22 13.4 22H15.2"/><path d="M20.9 8.4H22.7Q24.4 8.4 24.4 10.1V13Q24.4 15.2 27.8 15.2Q24.4 15.2 24.4 17.4V20.3Q24.4 22 22.7 22H20.9"/></g></svg>
<svg style="left:2388px;top:2021.5px" width="34" height="34" viewBox="0 0 34 34"><g fill="none" stroke="#1c7df2" stroke-width="1.25"><polygon points="17,3.5 28.7,10.25 28.7,23.75 17,30.5 5.3,23.75 5.3,10.25"/><polygon points="17,3.5 28.7,23.75 5.3,23.75"/></g><g fill="#1c7df2"><circle cx="17" cy="3.5" r="2.5"/><circle cx="28.7" cy="10.25" r="2.5"/><circle cx="28.7" cy="23.75" r="2.5"/><circle cx="17" cy="30.5" r="2.5"/><circle cx="5.3" cy="23.75" r="2.5"/><circle cx="5.3" cy="10.25" r="2.5"/></g></svg>
<svg style="left:2564.5px;top:2019.0px" width="39" height="39" viewBox="0 0 24 24"><path fill="#1c7df2" d="M12.89,3L14.85,3.4L11.11,21L9.15,20.6L12.89,3M19.59,12L16,8.41V5.58L22.41,12L16,18.41V15.58L19.59,12M1.59,12L8,5.58V8.41L4.41,12L8,15.58V18.41L1.59,12Z"/></svg>
<svg style="left:2696.2px;top:2019.0px" width="40" height="40" viewBox="0 0 24 24"><path fill="#1c7df2" d="M19.79,15.41C20.74,13.24 20.74,10.75 19.79,8.59L17.05,9.83C17.65,11.21 17.65,12.78 17.06,14.17L19.79,15.41M15.42,4.21C13.25,3.26 10.76,3.26 8.59,4.21L9.83,6.94C11.22,6.35 12.79,6.35 14.18,6.95L15.42,4.21M4.21,8.58C3.26,10.76 3.26,13.24 4.21,15.42L6.95,14.17C6.35,12.79 6.35,11.21 6.95,9.82L4.21,8.58M8.59,19.79C10.76,20.74 13.25,20.74 15.42,19.78L14.18,17.05C12.8,17.65 11.22,17.65 9.84,17.06L8.59,19.79M12,2A10,10 0 0,1 22,12A10,10 0 0,1 12,22A10,10 0 0,1 2,12A10,10 0 0,1 12,2M12,8A4,4 0 0,0 8,12A4,4 0 0,0 12,16A4,4 0 0,0 16,12A4,4 0 0,0 12,8Z"/></svg>
<div class="a" style="left:1884.6px;top:2039.5px;width:4.2px;height:4.2px;border-radius:50%;background:#838383"></div>
<div class="a" style="left:2012.9px;top:2039.5px;width:4.2px;height:4.2px;border-radius:50%;background:#838383"></div>
<div class="a" style="left:2263.4px;top:2039.5px;width:4.2px;height:4.2px;border-radius:50%;background:#838383"></div>
<div class="a" style="left:2372.9px;top:2039.5px;width:4.2px;height:4.2px;border-radius:50%;background:#838383"></div>
<div class="a" style="left:2551.9px;top:2039.5px;width:4.2px;height:4.2px;border-radius:50%;background:#838383"></div>
<div class="a" style="left:2683.7px;top:2039.5px;width:4.2px;height:4.2px;border-radius:50%;background:#838383"></div>
<span class="t" style="left:519.2px;top:2025.7px;font-size:28px;-webkit-text-stroke:0.45px;letter-spacing:0.223px;color:#7a7a7a">68d4065542a3</span>
<span class="t" style="left:716.1px;top:2025.7px;font-size:28px;-webkit-text-stroke:0.45px;letter-spacing:-0.250px;color:#7a7a7a">(v2.4.8)</span>
<span class="t" style="left:1207.4px;top:2025.7px;font-size:28px;-webkit-text-stroke:0.45px;color:#7a7a7a">2025-05-24</span>
<span class="t" style="left:1357.2px;top:2025.7px;font-size:28px;-webkit-text-stroke:0.45px;letter-spacing:-0.181px;color:#7a7a7a">21:15:46</span>
<span class="t" style="left:1471.7px;top:2025.7px;font-size:28px;-webkit-text-stroke:0.45px;transform:scaleX(0.9019);color:#7a7a7a">UTC</span>
<a class="t" style="left:1789.9px;top:2025.7px;font-size:28px;-webkit-text-stroke:0.45px;letter-spacing:-0.181px;color:#123ab9">Theme</a>
<a class="t" style="left:1943.3px;top:2025.7px;font-size:28px;-webkit-text-stroke:0.45px;transform:scaleX(0.9732);color:#123ab9">Docs</a>
<a class="t" style="left:2072.0px;top:2025.7px;font-size:28px;-webkit-text-stroke:0.45px;letter-spacing:-0.316px;color:#123ab9">Jinja</a>
<a class="t" style="left:2136.7px;top:2025.7px;font-size:28px;-webkit-text-stroke:0.45px;letter-spacing:0.292px;color:#123ab9">Renderer</a>
<a class="t" style="left:2322.7px;top:2025.7px;font-size:28px;-webkit-text-stroke:0.45px;transform:scaleX(0.9338);color:#123ab9">API</a>
<a class="t" style="left:2432.1px;top:2025.7px;font-size:28px;-webkit-text-stroke:0.45px;transform:scaleX(0.9698);color:#123ab9">GraphQL</a>
<a class="t" style="left:2611.3px;top:2025.7px;font-size:28px;-webkit-text-stroke:0.45px;transform:scaleX(0.9542);color:#123ab9">Code</a>
<a class="t" style="left:2742.4px;top:2025.7px;font-size:28px;-webkit-text-stroke:0.45px;letter-spacing:0.445px;color:#123ab9">Help</a>
</footer>
</body></html>
